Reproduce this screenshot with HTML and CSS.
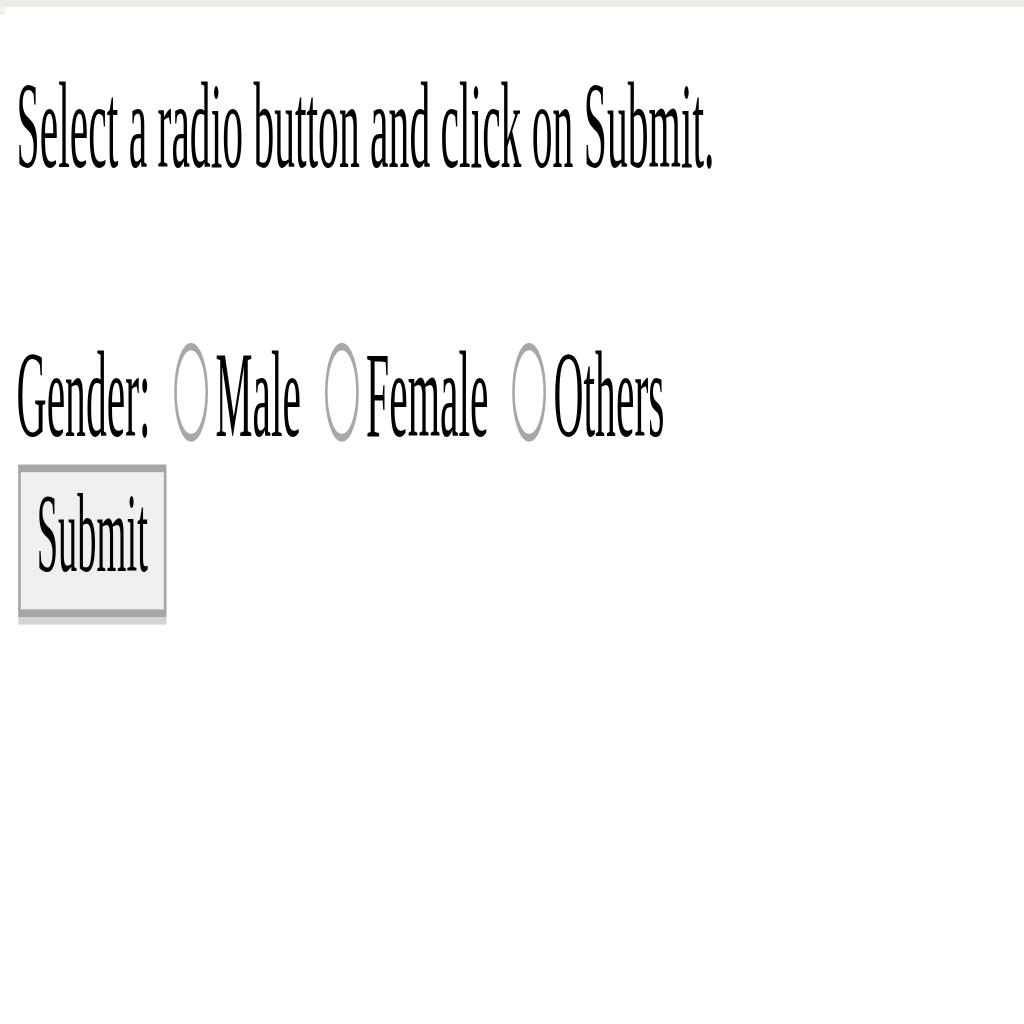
FILE: index.html
```html
<!DOCTYPE html>
<html>
<head>
<meta charset="utf-8">
<title>Radio</title>
<link rel="stylesheet" href="styles.css">
</head>
<body>
<div class="topbar"></div>
<div class="corner"></div>
<div class="page">
  <p class="intro">Select a radio button and click on Submit.</p>
  <form class="form">
    <div class="row">Gender: <input class="radio" type="radio" name="g" value="m">Male <input class="radio" type="radio" name="g" value="f">Female <input class="radio" type="radio" name="g" value="o">Others</div>
    <button class="submit" type="button">Submit</button>
  </form>
</div>
</body>
</html>
```
FILE: styles.css
```css
html {
  overflow: hidden;
}
body {
  margin: 0;
  padding: 0;
  min-height: 1024px;
  background: #ffffff;
}
.topbar {
  height: 7px;
  background: #eeebe8;
}
.corner {
  width: 5px;
  height: 8px;
  background: #f0f0f0;
}
.page {
  display: flow-root;
  width: 392px;
  padding: 6px 0 0 6.4px;
  transform: scale(2.6, 7.62);
  transform-origin: 0 0;
  font-family: "Liberation Serif", "Times New Roman", serif;
  font-size: 16px;
  line-height: 18.4px;
  color: #000000;
}
.intro {
  margin: 0 0 16.3px 0;
}
.form {
  margin: 0;
}
.row {
  white-space: nowrap;
  height: 18.4px;
}
.radio {
  -webkit-appearance: none;
  appearance: none;
  box-sizing: border-box;
  width: 13px;
  height: 13px;
  margin: 2px 3px 0 5px;
  border: 1px solid #a8a8a8;
  border-radius: 50%;
  background: #ffffff;
  vertical-align: -0.7px;
}
.submit {
  display: block;
  box-sizing: border-box;
  width: 57px;
  height: 20px;
  margin: -0.35px 0 0 0.6px;
  padding: 0 0 1px 0;
  border: 1px solid #a6a6a6;
  border-radius: 0;
  background: #f0f0f0;
  box-shadow: 0 1px 0 #d4d4d4;
  font-family: "Liberation Serif", "Times New Roman", serif;
  font-size: 14.8px;
  line-height: 17px;
  color: #000000;
}
```
